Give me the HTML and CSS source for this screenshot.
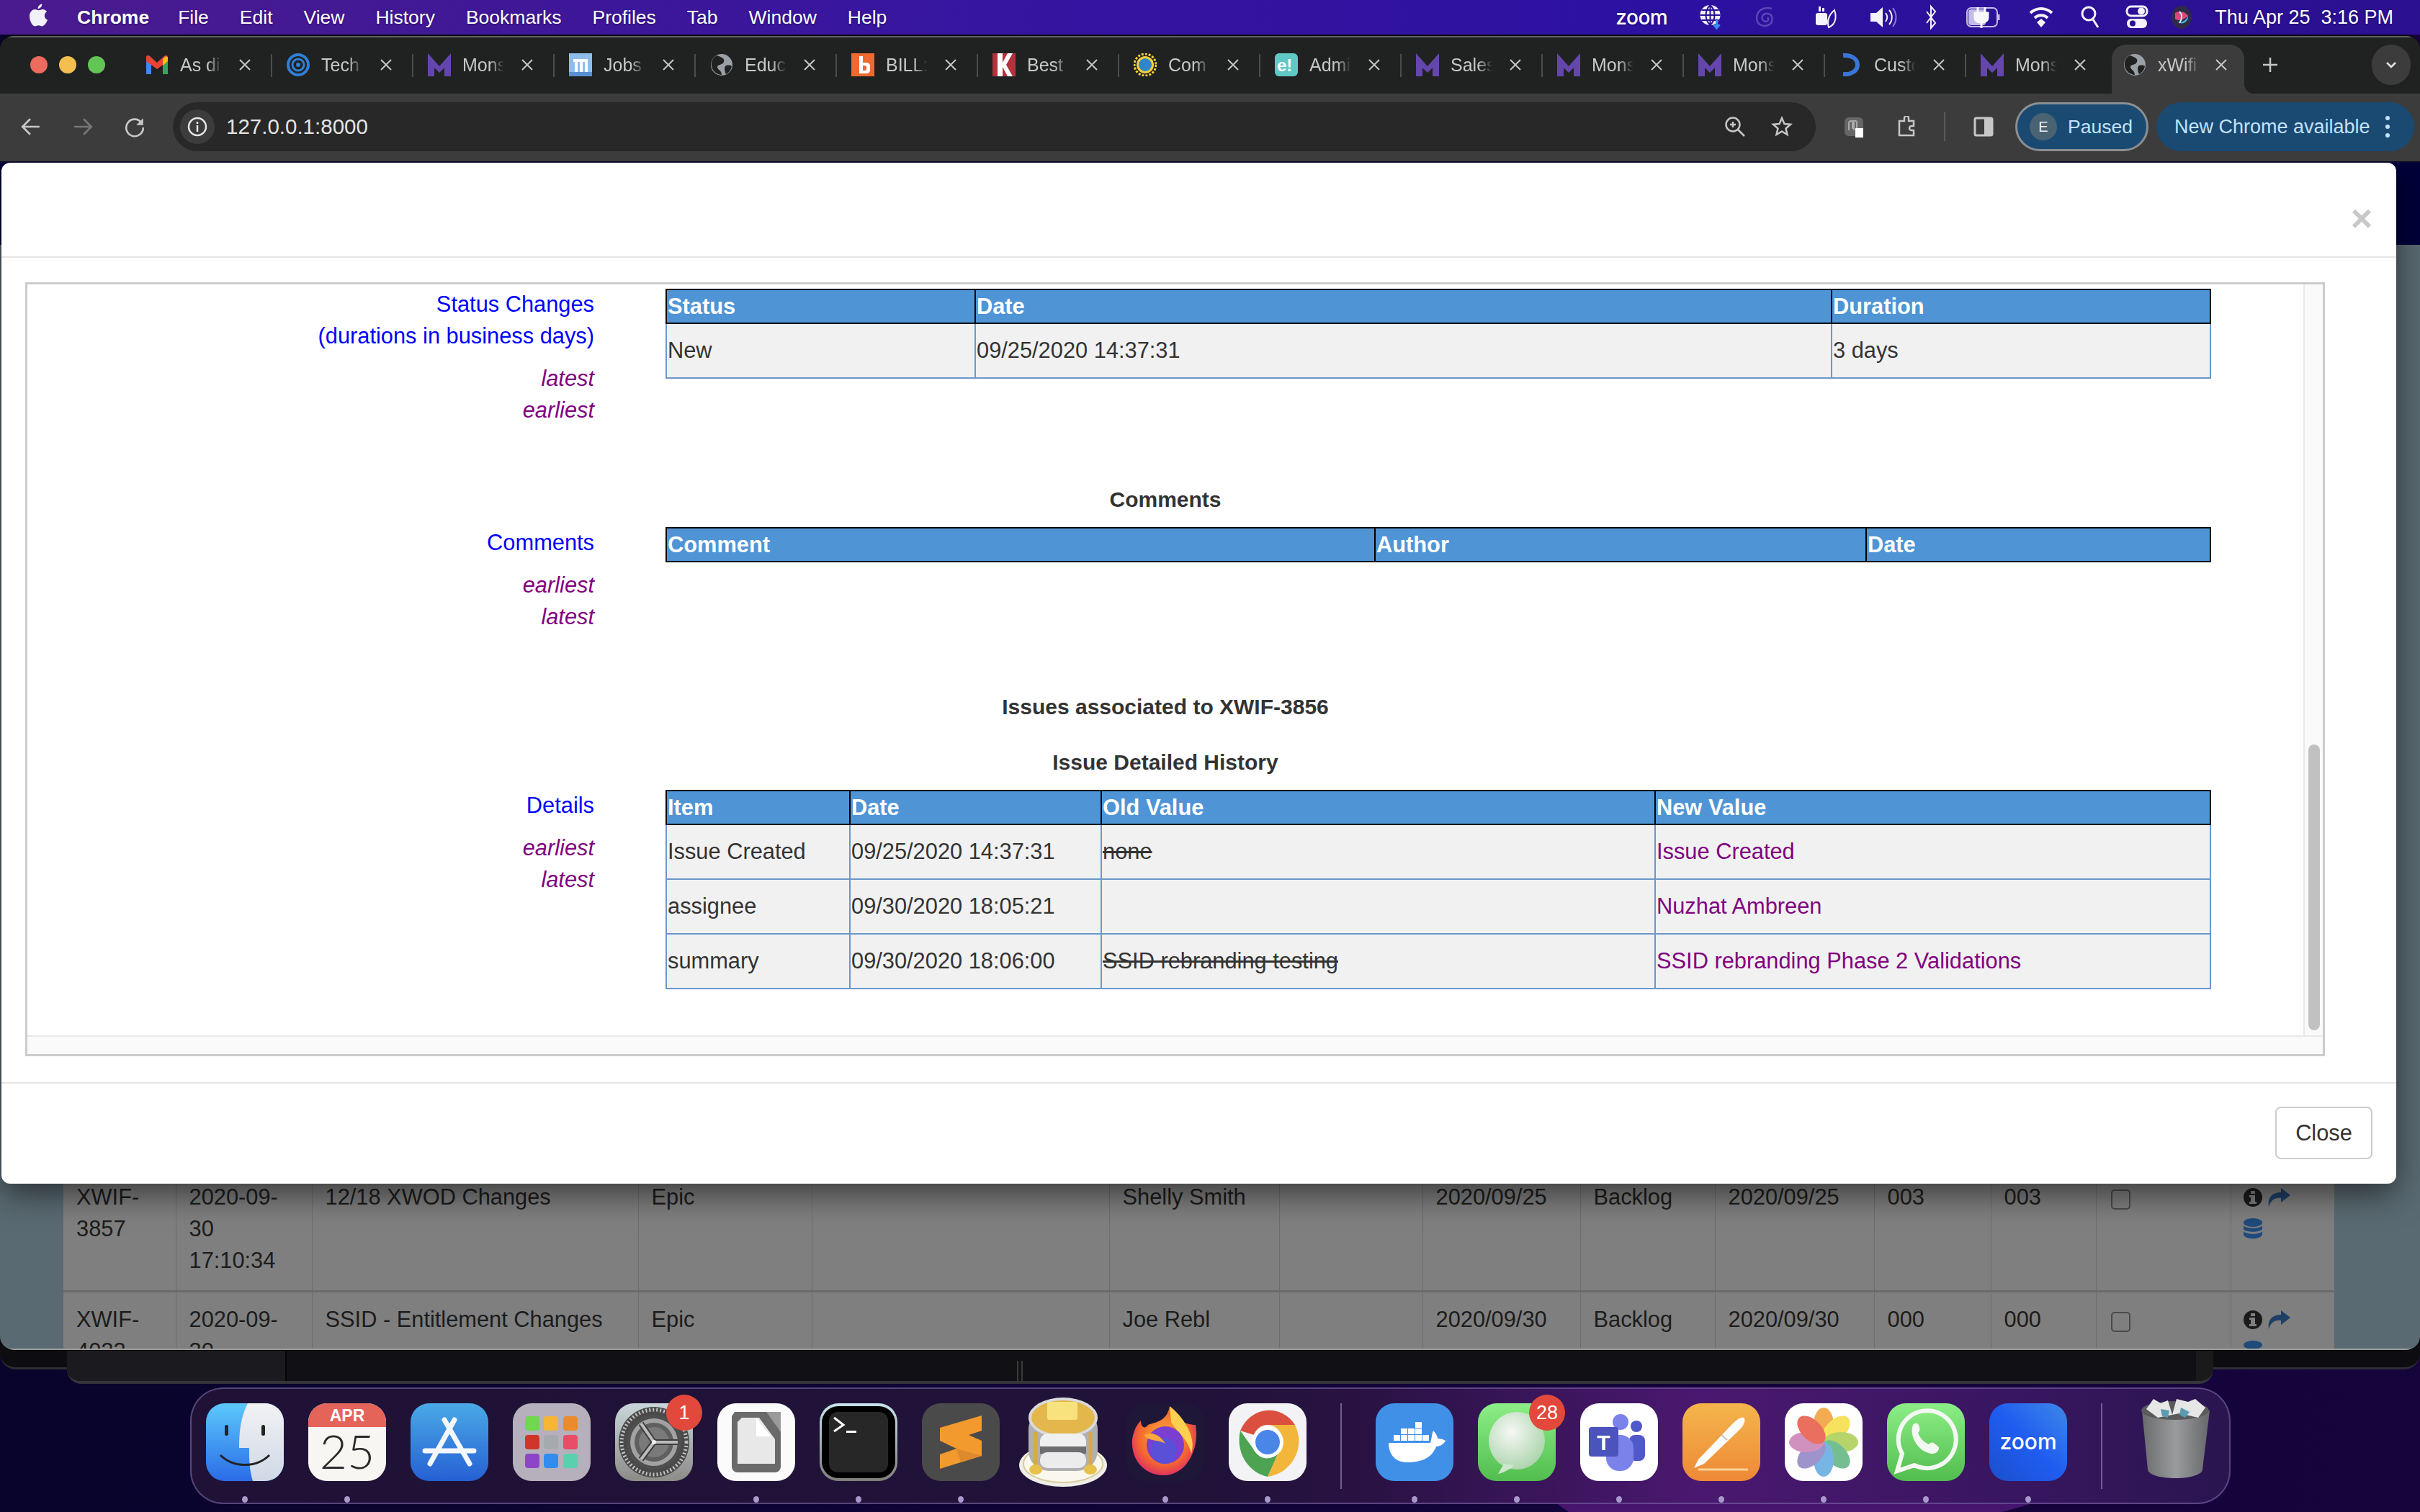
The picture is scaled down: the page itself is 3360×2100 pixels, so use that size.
FILE: index.html
```html
<!DOCTYPE html>
<html lang="en">
<head>
<meta charset="utf-8">
<title>xWiFi issue history</title>
<link rel="stylesheet" href="styles.css">
</head>
<body>
<svg class="defs" aria-hidden="true">
  <defs>
    <symbol id="fav-m" viewBox="0 0 32 32"><path d="M0 0 L16 18 L32 0 V32 H23 V20 L16 27 L9 20 V32 H0z" fill="#6546ae"/></symbol>
    <symbol id="fav-globe" viewBox="0 0 32 32"><circle cx="16" cy="16" r="15" fill="#9aa0a6"/><path d="M9 3c6 2 12 4 10 9s-9 3-9 7 6 4 6 11c-6 0-13-5-14-12S4 6 9 3zM22 17c4-1 7 0 8 1-1 5-4 9-8 11-2-4-3-10 0-12z" fill="#202222"/></symbol>
    <symbol id="tab-x" viewBox="0 0 20 20"><path d="M3 3 L17 17 M17 3 L3 17" stroke="#c4c7c5" stroke-width="2" fill="none"/></symbol>
    <symbol id="act-info" viewBox="0 0 28 28"><circle cx="14" cy="14" r="13" fill="#1b1b1b"/><rect x="11" y="5" width="6" height="4" fill="#7f7f7f"/><path d="M9 11h8v9h2v3H9v-3h2v-6H9z" fill="#7f7f7f"/></symbol>
    <symbol id="act-share" viewBox="0 0 33 28"><path d="M20 1 L33 11 L20 21 V15 C11 14 6 18 3 27 C1 15 7 7 20 7z" fill="#1f3f66"/></symbol>
    <symbol id="act-db" viewBox="0 0 28 30"><ellipse cx="14" cy="6" rx="13" ry="6" fill="#1f4a7a"/><path d="M1 10c3 5 23 5 26 0v5c-3 5-23 5-26 0zM1 18c3 5 23 5 26 0v5c-3 7-23 7-26 0z" fill="#1f4a7a"/></symbol>
    <linearGradient id="g-finder" x1="0" y1="0" x2="0" y2="1"><stop offset="0" stop-color="#5cc8fb"/><stop offset="1" stop-color="#2a6ce8"/></linearGradient>
    <linearGradient id="g-finder2" x1="0" y1="0" x2="0" y2="1"><stop offset="0" stop-color="#f2f2f4"/><stop offset="1" stop-color="#cfd9e6"/></linearGradient>
    <linearGradient id="g-store" x1="0" y1="0" x2="0" y2="1"><stop offset="0" stop-color="#4aa9e6"/><stop offset="1" stop-color="#2560d4"/></linearGradient>
    <linearGradient id="g-gear" x1="0" y1="0" x2="0" y2="1"><stop offset="0" stop-color="#c9d6da"/><stop offset="1" stop-color="#8c8c88"/></linearGradient>
    <linearGradient id="g-term" x1="0" y1="0" x2="0" y2="1"><stop offset="0" stop-color="#c6e2ea"/><stop offset="1" stop-color="#7f7f7b"/></linearGradient>
    <linearGradient id="g-msg" x1="0" y1="0" x2="0" y2="1"><stop offset="0" stop-color="#8cee86"/><stop offset="1" stop-color="#52bd4f"/></linearGradient>
    <linearGradient id="g-pages" x1="0" y1="0" x2="0" y2="1"><stop offset="0" stop-color="#f4b54c"/><stop offset="1" stop-color="#ee8936"/></linearGradient>
    <linearGradient id="g-zoom" x1="1" y1="0" x2="0" y2="1"><stop offset="0" stop-color="#3f88e8"/><stop offset=".5" stop-color="#1f5cf0"/><stop offset="1" stop-color="#1b50cc"/></linearGradient>
    <linearGradient id="g-trash" x1="0" y1="0" x2="1" y2="0"><stop offset="0" stop-color="#6a6b6d"/><stop offset=".5" stop-color="#9a9b9c"/><stop offset="1" stop-color="#66676a"/></linearGradient>
    <radialGradient id="g-bubble" cx=".4" cy=".35" r=".8"><stop offset="0" stop-color="#f5f8f4"/><stop offset="1" stop-color="#9fcea0"/></radialGradient>
    <radialGradient id="g-fox" cx=".5" cy=".45" r=".6"><stop offset="0" stop-color="#ffb03a"/><stop offset=".65" stop-color="#f4682e"/><stop offset="1" stop-color="#d9246f"/></radialGradient>
  </defs>
</svg>

<div class="wedge"></div>

<header class="menubar">
  <nav class="menu">
    <svg class="apple" viewBox="0 0 26 32"><path d="M18 0c.3 3-2.500 7-6 7-.4-3 2.500-6.500 6-7zM13 9c2 0 3.500-1.300 6-1.300 2 0 4.500 1 6 3.300-5 3-4 10 1 12-1.500 4-5 9-8 9-2 0-3-1.200-5-1.200S9.500 32 8 32C4 32 0 24 0 18 0 11 4.500 7.700 8 7.700c2 0 3.500 1.300 5 1.300z" fill="#f2f0f8"/></svg>
    <span class="menu-app">Chrome</span>
    <span>File</span><span>Edit</span><span>View</span><span>History</span><span>Bookmarks</span><span>Profiles</span><span>Tab</span><span>Window</span><span>Help</span>
  </nav>
  <div class="status">
    <span class="status-zoom">zoom</span>
    <svg class="st-cell" viewBox="0 0 32 36"><circle cx="15" cy="15" r="14" fill="#f0f0f8"/><path d="M15 1v28M1 15h28M3 8h24M3 22h24M15 1c-8 8-8 20 0 28M15 1c8 8 8 20 0 28" stroke="#2a1098" stroke-width="2" fill="none"/><path d="M24 22v9M20 28l4 5 4-5" stroke="#3a8cf0" stroke-width="3" fill="none"/></svg>
    <svg class="st-cell" viewBox="0 0 32 36"><path d="M26 6C14 2 5 10 5 19s9 13 16 10 8-14 0-16-11 7-6 10 8-2 5-5" stroke="#5a46b4" stroke-width="2.500" fill="none"/></svg>
    <svg class="st-cell" viewBox="0 0 38 36"><rect x="4" y="12" width="16" height="17" rx="3" fill="#f4f2fa"/><rect x="8" y="3" width="3" height="7" fill="#f4f2fa"/><rect x="13" y="5" width="3" height="5" fill="#f4f2fa"/><path d="M22 32c8-3 12-12 8-24-7 6-11 14-8 24z" stroke="#f4f2fa" stroke-width="2" fill="none"/></svg>
    <svg class="st-cell" viewBox="0 0 38 36"><path d="M2 12h8l9-8v28l-9-8H2z" fill="#f4f2fa"/><path d="M23 12c3 4 3 8 0 12M28 8c5 6 5 14 0 20" stroke="#f4f2fa" stroke-width="2" fill="none"/><path d="M33 5c6 8 6 18 0 26" stroke="#8a7ad0" stroke-width="2" fill="none"/></svg>
    <svg class="st-cell" viewBox="0 0 18 36"><path d="M3 10l12 16-6 7V3l6 7L3 26" stroke="#f4f2fa" stroke-width="2" fill="none"/></svg>
    <svg class="st-cell" viewBox="0 0 50 36"><rect x="2" y="5" width="42" height="26" rx="6" stroke="#c4bce8" stroke-width="2" fill="none"/><rect x="4" y="7" width="24" height="22" rx="4" fill="#c4bce8"/><path d="M17 4v8M27 4v8M13 12h18v6c0 5-4 7-9 7s-9-2-9-7zM22 25v8" stroke="#f8f8fc" stroke-width="3" fill="#f8f8fc"/><path d="M46 14v8" stroke="#c4bce8" stroke-width="3"/></svg>
    <svg class="st-cell" viewBox="0 0 36 36"><path d="M3 12c9-8 21-8 30 0M9 19c5-5 13-5 18 0" stroke="#f4f2fa" stroke-width="4" fill="none"/><path d="M12 25l6-5 6 5-6 7z" fill="#f4f2fa"/></svg>
    <svg class="st-cell" viewBox="0 0 26 36"><circle cx="12" cy="13" r="9" stroke="#f4f2fa" stroke-width="3" fill="none"/><path d="M18 21l7 11" stroke="#f4f2fa" stroke-width="3"/></svg>
    <svg class="st-cell" viewBox="0 0 32 36"><rect x="2" y="3" width="28" height="13" rx="6" stroke="#f4f2fa" stroke-width="3" fill="none"/><circle cx="22" cy="9.500" r="5" fill="#f4f2fa"/><rect x="2" y="20" width="28" height="13" rx="6" fill="#f4f2fa"/><circle cx="10" cy="26.500" r="4" fill="#2a1098"/></svg>
    <svg class="st-cell" viewBox="0 0 30 36"><ellipse cx="15" cy="18" rx="14" ry="16" fill="#2f2a48"/><path d="M6 12c6-4 14-2 18 4-6 6-14 8-18 4z" fill="#d8487c"/><path d="M9 24c5 2 11 0 15-8 1 8-8 14-15 8z" fill="#4ab0e0"/><path d="M12 10c4 4 4 10 0 16" stroke="#c0f0e0" stroke-width="2" fill="none"/></svg>
    <span class="status-date">Thu Apr 25&nbsp; 3:16 PM</span>
  </div>
</header>

<div class="back-window back-wide"></div>
<div class="back-window back-mid">
  <div class="back-side"></div>
  <div class="back-main"><span class="back-grip"></span></div>
  <div class="back-end"></div>
</div>

<main class="chrome">
  <div class="strip">
    <div class="lights"><i class="light red"></i><i class="light yellow"></i><i class="light green"></i></div>
    <div class="tab">
      <svg class="fav" viewBox="0 0 32 32"><path d="M1 5v24h7V14z" fill="#4285f4"/><path d="M31 5v24h-7V14z" fill="#34a853"/><path d="M1 5c0-2 3-3 5-1l10 9 10-9c2-2 5-1 5 1v6L16 22 1 11z" fill="#ea4335"/><path d="M24 8l3-3c2-1 4 0 4 2v4l-7 6z" fill="#fbbc04"/></svg>
      <span class="tab-title">As di</span><svg class="tab-close"><use href="#tab-x"/></svg>
    </div>
    <div class="tab">
      <svg class="fav" viewBox="0 0 32 32"><circle cx="16" cy="16" r="14" stroke="#2f7fd6" stroke-width="4" fill="none"/><circle cx="16" cy="16" r="8" stroke="#2f7fd6" stroke-width="3" fill="none"/><circle cx="16" cy="16" r="3" fill="#2f7fd6"/></svg>
      <span class="tab-title">Tech</span><svg class="tab-close"><use href="#tab-x"/></svg>
    </div>
    <div class="tab"><svg class="fav"><use href="#fav-m"/></svg><span class="tab-title">Mons</span><svg class="tab-close"><use href="#tab-x"/></svg></div>
    <div class="tab">
      <svg class="fav" viewBox="0 0 32 32"><rect width="32" height="32" fill="#8fbde9"/><path d="M6 8h20v18h-4V12h-3v14h-4V12h-3v14H8V12H6z" fill="#fff"/><rect y="26" width="32" height="6" fill="#5b8fd0"/></svg>
      <span class="tab-title">Jobs</span><svg class="tab-close"><use href="#tab-x"/></svg>
    </div>
    <div class="tab"><svg class="fav"><use href="#fav-globe"/></svg><span class="tab-title">Educ</span><svg class="tab-close"><use href="#tab-x"/></svg></div>
    <div class="tab">
      <svg class="fav" viewBox="0 0 32 32"><rect width="32" height="32" fill="#ef6a2e"/><path d="M11 4h5v9h5c3 0 5 2 5 5v5c0 3-2 5-5 5H11zM16 17v7h3c1 0 2-1 2-2v-3c0-1-1-2-2-2z" fill="#fff"/></svg>
      <span class="tab-title">BILL:</span><svg class="tab-close"><use href="#tab-x"/></svg>
    </div>
    <div class="tab">
      <svg class="fav" viewBox="0 0 32 32"><rect width="32" height="32" fill="#b3323c"/><path d="M7 0h7v13L21 0h7l-9 16 9 16h-7l-7-13v13H7z" fill="#fff"/></svg>
      <span class="tab-title">Best</span><svg class="tab-close"><use href="#tab-x"/></svg>
    </div>
    <div class="tab">
      <svg class="fav" viewBox="0 0 32 32"><circle cx="16" cy="16" r="15" stroke="#f5cf3c" stroke-width="3" stroke-dasharray="3 2" fill="none"/><circle cx="16" cy="16" r="12" fill="#f5cf3c"/><circle cx="16" cy="16" r="9" fill="#2f86c9"/></svg>
      <span class="tab-title">Com</span><svg class="tab-close"><use href="#tab-x"/></svg>
    </div>
    <div class="tab">
      <svg class="fav" viewBox="0 0 32 32"><rect width="32" height="32" rx="6" fill="#5fc9c5"/><text class="fav-e" x="3" y="25">e!</text></svg>
      <span class="tab-title">Admi</span><svg class="tab-close"><use href="#tab-x"/></svg>
    </div>
    <div class="tab"><svg class="fav"><use href="#fav-m"/></svg><span class="tab-title">Sales</span><svg class="tab-close"><use href="#tab-x"/></svg></div>
    <div class="tab"><svg class="fav"><use href="#fav-m"/></svg><span class="tab-title">Mons</span><svg class="tab-close"><use href="#tab-x"/></svg></div>
    <div class="tab"><svg class="fav"><use href="#fav-m"/></svg><span class="tab-title">Mons</span><svg class="tab-close"><use href="#tab-x"/></svg></div>
    <div class="tab">
      <svg class="fav" viewBox="0 0 32 32"><path d="M5 3c12-1 20 5 20 13S17 30 5 29" stroke="#3a76d8" stroke-width="6" fill="none"/></svg>
      <span class="tab-title">Custo</span><svg class="tab-close"><use href="#tab-x"/></svg>
    </div>
    <div class="tab"><svg class="fav"><use href="#fav-m"/></svg><span class="tab-title">Mons</span><svg class="tab-close"><use href="#tab-x"/></svg></div>
    <div class="tab tab-active"><svg class="fav"><use href="#fav-globe"/></svg><span class="tab-title">xWifi</span><svg class="tab-close"><use href="#tab-x"/></svg></div>
    <svg class="newtab" viewBox="0 0 24 24"><path d="M12 2v20M2 12h20" stroke="#c4c7c5" stroke-width="2.500"/></svg>
    <div class="tabmenu"><svg class="tabmenu-icon" viewBox="0 0 16 12"><path d="M2 3l6 6 6-6" stroke="#e3e3e3" stroke-width="2.500" fill="none"/></svg></div>
  </div>

  <div class="toolbar">
    <button class="tool tool-first"><svg class="tool-icon" viewBox="0 0 28 28"><path d="M25 14H4M13 4L3 14l10 10" stroke="#c7c7c7" stroke-width="2.500" fill="none"/></svg></button>
    <button class="tool"><svg class="tool-icon" viewBox="0 0 28 28"><path d="M3 14h21M15 4l10 10-10 10" stroke="#777" stroke-width="2.500" fill="none"/></svg></button>
    <button class="tool"><svg class="tool-icon" viewBox="0 0 28 28"><path d="M23 9A11 11 0 1 0 25 15" stroke="#c7c7c7" stroke-width="2.500" fill="none"/><path d="M25 3v9h-9z" fill="#c7c7c7"/></svg></button>
    <div class="omnibox">
      <span class="siteinfo"><svg class="siteinfo-icon" viewBox="0 0 28 28"><circle cx="14" cy="14" r="12" stroke="#e6e6e6" stroke-width="2.500" fill="none"/><path d="M14 12v9M14 7v3" stroke="#e6e6e6" stroke-width="2.500"/></svg></span>
      <span class="url">127.0.0.1:8000</span>
      <svg class="omni-icon omni-zoom" viewBox="0 0 30 30"><circle cx="12" cy="12" r="9.500" stroke="#c7c7c7" stroke-width="2.500" fill="none"/><path d="M19 19l9 9M12 8v8M8 12h8" stroke="#c7c7c7" stroke-width="2.500"/></svg>
      <svg class="omni-icon omni-star" viewBox="0 0 30 30"><path d="M15 3l3.500 8 8.500.8-6.500 5.700 2 8.500-7.500-4.500L7.500 26l2-8.500L3 11.800l8.500-.8z" stroke="#c7c7c7" stroke-width="2.500" fill="none"/></svg>
    </div>
    <button class="tool tool-ext"><svg class="tool-icon" viewBox="0 0 30 30"><rect x="2" y="2" width="26" height="26" rx="6" fill="#666"/><path d="M8 20V10c0-4 7-4 7 0v10M13 18V9c0-3 6-3 6 0v9" stroke="#aaa" stroke-width="2" fill="none"/><rect x="17" y="17" width="11" height="13" fill="#fff"/></svg></button>
    <button class="tool tool-near"><svg class="tool-icon" viewBox="0 0 30 30"><path d="M5 7h7V3a3 3 0 0 1 6 0v4h7v7h-3a3 3 0 0 0 0 6h3v7H5z" stroke="#c7c7c7" stroke-width="2.500" fill="none"/></svg></button>
    <span class="tool-sep"></span>
    <button class="tool"><svg class="tool-icon" viewBox="0 0 30 30"><rect x="3" y="3" width="24" height="24" rx="2" stroke="#c7c7c7" stroke-width="3" fill="none"/><rect x="16" y="3" width="11" height="24" fill="#c7c7c7"/></svg></button>
    <div class="pill pill-profile"><span class="avatar">E</span><span class="pill-text">Paused</span></div>
    <div class="pill pill-update"><span class="pill-text">New Chrome available</span><span class="kebab"><i></i><i></i><i></i></span></div>
  </div>

  <section class="page">
    <div class="page-nav"></div>
    <div class="page-spacer"></div>
    <table class="issues">
      <colgroup><col class="c1"><col class="c2"><col class="c3"><col class="c4"><col class="c5"><col class="c6"><col class="c7"><col class="c8"><col class="c9"><col class="c10"><col class="c11"><col class="c12"><col class="c13"><col class="c14"></colgroup>
      <tr>
        <td>XWIF-3857</td><td>2020-09-30 17:10:34</td><td>12/18 XWOD Changes</td><td>Epic</td><td></td><td>Shelly Smith</td><td></td><td>2020/09/25</td><td>Backlog</td><td>2020/09/25</td><td>003</td><td>003</td>
        <td><span class="bg-check"></span></td>
        <td class="actions"><div class="act-row"><svg class="act-info"><use href="#act-info"/></svg><svg class="act-share"><use href="#act-share"/></svg></div><div class="act-row"><svg class="act-db"><use href="#act-db"/></svg></div></td>
      </tr>
      <tr>
        <td>XWIF-4023</td><td>2020-09-30 17:10:34</td><td>SSID - Entitlement Changes</td><td>Epic</td><td></td><td>Joe Rebl</td><td></td><td>2020/09/30</td><td>Backlog</td><td>2020/09/30</td><td>000</td><td>000</td>
        <td><span class="bg-check"></span></td>
        <td class="actions"><div class="act-row"><svg class="act-info"><use href="#act-info"/></svg><svg class="act-share"><use href="#act-share"/></svg></div><div class="act-row"><svg class="act-db"><use href="#act-db"/></svg></div></td>
      </tr>
    </table>

    <div class="modal">
      <div class="modal-head"><span class="modal-x">×</span></div>
      <div class="modal-body">
        <div class="frame">
          <div class="view">
            <div class="hist hist-first">
              <div class="hist-label">
                <a class="lnk">Status Changes</a>
                <a class="lnk">(durations in business days)</a>
                <a class="sort">latest</a>
                <a class="sort-next">earliest</a>
              </div>
              <table class="grid-table">
                <colgroup><col class="s1"><col class="s2"><col class="s3"></colgroup>
                <tr><th>Status</th><th>Date</th><th>Duration</th></tr>
                <tr><td>New</td><td>09/25/2020 14:37:31</td><td>3 days</td></tr>
              </table>
            </div>
            <h4 class="sec-title sec-comments">Comments</h4>
            <div class="hist">
              <div class="hist-label">
                <a class="lnk">Comments</a>
                <a class="sort">earliest</a>
                <a class="sort-next">latest</a>
              </div>
              <table class="grid-table">
                <colgroup><col class="m1"><col class="m2"><col class="m3"></colgroup>
                <tr><th>Comment</th><th>Author</th><th>Date</th></tr>
              </table>
            </div>
            <h4 class="sec-title sec-issues">Issues associated to XWIF-3856</h4>
            <h4 class="sec-title">Issue Detailed History</h4>
            <div class="hist">
              <div class="hist-label">
                <a class="lnk">Details</a>
                <a class="sort">earliest</a>
                <a class="sort-next">latest</a>
              </div>
              <table class="grid-table">
                <colgroup><col class="d1"><col class="d2"><col class="d3"><col class="d4"></colgroup>
                <tr><th>Item</th><th>Date</th><th>Old Value</th><th>New Value</th></tr>
                <tr><td>Issue Created</td><td>09/25/2020 14:37:31</td><td><del>none</del></td><td class="newval">Issue Created</td></tr>
                <tr><td>assignee</td><td>09/30/2020 18:05:21</td><td></td><td class="newval">Nuzhat Ambreen</td></tr>
                <tr><td>summary</td><td>09/30/2020 18:06:00</td><td><del>SSID rebranding testing</del></td><td class="newval">SSID rebranding Phase 2 Validations</td></tr>
              </table>
            </div>
          </div>
          <div class="vbar"><div class="vthumb"></div></div>
          <div class="hbar"></div>
        </div>
      </div>
      <div class="modal-foot"><button class="btn-close">Close</button></div>
    </div>
  </section>
</main>

<footer class="dock">
  <div class="dock-item"><svg class="app" viewBox="0 0 108 108"><rect width="108" height="108" rx="26" fill="url(#g-finder)"/><path d="M58 0H82a26 26 0 0 1 26 26V82a26 26 0 0 1-26 26H65C60 92 60 78 60 62H46C46 40 48 20 58 0z" fill="url(#g-finder2)"/><rect x="26" y="30" width="5" height="15" rx="2.500" fill="#222"/><rect x="77" y="30" width="5" height="15" rx="2.500" fill="#222"/><path d="M20 72c18 18 50 18 68 0" stroke="#222" stroke-width="3" fill="none"/></svg><i class="dot"></i></div>
  <div class="dock-item"><svg class="app" viewBox="0 0 108 108"><rect width="108" height="108" rx="26" fill="#f7f6f3"/><path d="M0 33V26A26 26 0 0 1 26 0H82a26 26 0 0 1 26 26V33z" fill="#e4645a"/><text class="cal-month" x="54" y="25">APR</text><text class="cal-day" x="54" y="91">25</text></svg><i class="dot"></i></div>
  <div class="dock-item"><svg class="app" viewBox="0 0 108 108"><rect width="108" height="108" rx="26" fill="url(#g-store)"/><path d="M47 23l35 61M61 23L27 84M20 66h68" stroke="#f4f8fd" stroke-width="7" stroke-linecap="round" fill="none"/></svg><i class="dot dot-off"></i></div>
  <div class="dock-item"><svg class="app" viewBox="0 0 108 108"><rect width="108" height="108" rx="26" fill="#b5b0bc"/><rect x="17" y="18" width="20" height="20" rx="4" fill="#6fd84f"/><rect x="43" y="18" width="20" height="20" rx="4" fill="#f5b636"/><rect x="70" y="18" width="20" height="20" rx="4" fill="#ec8a2e"/><rect x="17" y="44" width="20" height="20" rx="4" fill="#d0352a"/><rect x="43" y="44" width="20" height="20" rx="4" fill="#a4aaad"/><rect x="70" y="44" width="20" height="20" rx="4" fill="#e94d68"/><rect x="17" y="70" width="20" height="20" rx="4" fill="#8e44c8"/><rect x="43" y="70" width="20" height="20" rx="4" fill="#2f8df0"/><rect x="70" y="70" width="20" height="20" rx="4" fill="#5bd0ae"/></svg><i class="dot dot-off"></i></div>
  <div class="dock-item"><svg class="app" viewBox="0 0 108 108"><rect width="108" height="108" rx="26" fill="url(#g-gear)"/><circle cx="54" cy="54" r="49" fill="#4a4a4a"/><circle cx="54" cy="54" r="45" stroke="#c4c4c4" stroke-width="5" stroke-dasharray="2 3" fill="none"/><circle cx="54" cy="54" r="38" fill="#4f4f4f"/><circle cx="54" cy="54" r="33" fill="#a2a2a2"/><circle cx="54" cy="54" r="27" fill="#5f5f5f"/><circle cx="54" cy="54" r="21" fill="#7a7a7a"/><path d="M54 54L36 28M54 54H87M54 54L36 78" stroke="#3c3c3c" stroke-width="8"/><path d="M54 54L36 28M54 54H87M54 54L36 78" stroke="#bbb" stroke-width="4"/><circle cx="54" cy="54" r="3" fill="#eee"/></svg><i class="dot dot-off"></i><span class="badge">1</span></div>
  <div class="dock-item"><svg class="app" viewBox="0 0 108 108"><rect width="108" height="108" rx="26" fill="#fbfbfb"/><path d="M24 12H74L88 30V88a8 8 0 0 1-8 8H28a8 8 0 0 1-8-8V18z" fill="#6a6a6a"/><path d="M68 12H88V40z" fill="#9a9a9a"/><path d="M34 20H58L80 50V84H28V26z" fill="#e8e8e8"/><path d="M54 20V46H74z" fill="#fff"/></svg><i class="dot"></i></div>
  <div class="dock-item"><svg class="app" viewBox="0 0 108 108"><rect width="108" height="108" rx="26" fill="url(#g-term)"/><rect x="3" y="4" width="102" height="100" rx="23" fill="#000"/><rect x="13" y="12" width="82" height="84" rx="12" fill="#272727"/><path d="M20 20l13 10-13 9" stroke="#fff" stroke-width="3" fill="none"/><rect x="37" y="38" width="14" height="3" fill="#fff"/></svg><i class="dot"></i></div>
  <div class="dock-item"><svg class="app" viewBox="0 0 108 108"><rect width="108" height="108" rx="26" fill="#4a4a4a"/><path d="M83 17V38L65 44 83 52V73L25 91V71L48 63 25 52V34z" fill="#f29a2e"/><path d="M48 63L83 73 54 82z" fill="#dc8a2c"/></svg><i class="dot"></i></div>
  <div class="dock-item"><svg class="app" viewBox="0 0 108 108"><ellipse cx="54" cy="86" rx="61" ry="30" fill="#efeee8"/><ellipse cx="54" cy="84" rx="55" ry="26" fill="#faf8ee" stroke="#d8cc9c" stroke-width="2"/><rect x="6" y="8" width="96" height="86" rx="28" fill="#b0b0b2"/><ellipse cx="54" cy="20" rx="48" ry="28" fill="#d9dadc"/><ellipse cx="54" cy="20" rx="44" ry="24" fill="#e3b74c"/><rect x="32" y="-2" width="42" height="25" rx="3" fill="#f7e27e"/><rect x="22" y="42" width="64" height="26" rx="11" fill="#f0f0f0"/><rect x="22" y="60" width="64" height="10" fill="#6e6e70"/><rect x="22" y="68" width="64" height="22" rx="10" fill="#ececec"/><path d="M16 40v50M92 40v50" stroke="#d9ab3c" stroke-width="5"/><ellipse cx="16" cy="92" rx="9" ry="7" fill="#e8c04c"/><ellipse cx="92" cy="92" rx="9" ry="7" fill="#e8c04c"/></svg><i class="dot dot-off"></i></div>
  <div class="dock-item"><svg class="app" viewBox="0 0 108 108"><rect width="108" height="108" rx="26" fill="#1e1738"/><path d="M60 4C62 24 86 30 96 30 102 62 84 100 52 100 24 100 6 78 8 50 10 38 14 30 20 24 20 34 26 36 30 30 40 26 56 26 60 4z" fill="url(#g-fox)"/><path d="M60 4C78 18 98 46 90 70 86 50 70 40 62 26z" fill="#ffd050"/><circle cx="54" cy="58" r="26" fill="#7a3fd0"/><circle cx="52" cy="66" r="18" fill="#5a50d8"/><path d="M24 44c14-6 24 2 30 12-10-6-22-2-30-12z" fill="#ffa83a"/></svg><i class="dot"></i></div>
  <div class="dock-item"><svg class="app" viewBox="0 0 108 108"><rect width="108" height="108" rx="26" fill="#f3f3f6"/><path d="M16 38A44 48 0 0 1 92 30H54a20 22 0 0 0-19 14z" fill="#db4f3f"/><path d="M92 30A50 50 0 0 1 54 102L70 66A20 22 0 0 0 54 30z" fill="#f2b63a"/><path d="M54 102A48 52 0 0 1 16 38L36 66A20 22 0 0 0 70 66z" fill="#4ea352"/><circle cx="54" cy="54" r="22" fill="#fff"/><circle cx="54" cy="54" r="17" fill="#4a86e8"/></svg><i class="dot"></i></div>
  <span class="dock-sep"></span>
  <div class="dock-item"><svg class="app" viewBox="0 0 108 108"><rect width="108" height="108" rx="26" fill="#4090e8"/><g fill="#fff"><rect x="55" y="26" width="9" height="8"/><rect x="35" y="35" width="9" height="8"/><rect x="45" y="35" width="9" height="8"/><rect x="55" y="35" width="9" height="8"/><rect x="25" y="44" width="9" height="8"/><rect x="35" y="44" width="9" height="8"/><rect x="45" y="44" width="9" height="8"/><rect x="55" y="44" width="9" height="8"/><rect x="65" y="44" width="9" height="8"/><path d="M18 55H76C78 48 78 42 80 38 84 42 86 46 86 49 90 49 94 50 97 52 94 58 88 60 84 60 78 76 64 82 44 82 28 82 18 72 18 55z"/></g></svg><i class="dot"></i></div>
  <div class="dock-item"><svg class="app" viewBox="0 0 108 108"><rect width="108" height="108" rx="26" fill="url(#g-msg)"/><ellipse cx="54" cy="52" rx="39" ry="40" fill="url(#g-bubble)"/><path d="M36 84L28 98C36 96 44 92 50 86z" fill="#cfe6cf"/></svg><i class="dot"></i><span class="badge">28</span></div>
  <div class="dock-item"><svg class="app" viewBox="0 0 108 108"><rect width="108" height="108" rx="26" fill="#fff"/><circle cx="56" cy="26" r="11" fill="#7b83eb"/><circle cx="78" cy="32" r="8" fill="#5059c9"/><rect x="68" y="44" width="22" height="36" rx="8" fill="#5059c9"/><rect x="36" y="44" width="38" height="50" rx="18" fill="#7b83eb"/><rect x="12" y="33" width="41" height="41" rx="4" fill="#4b53bc"/><text class="teams-t" x="32.500" y="65">T</text></svg><i class="dot"></i></div>
  <div class="dock-item"><svg class="app" viewBox="0 0 108 108"><rect width="108" height="108" rx="26" fill="url(#g-pages)"/><path d="M22 92H91" stroke="#fbd29a" stroke-width="3"/><path d="M16 90L22 78 70 28C78 20 84 18 86 21 88 25 84 32 78 38L30 84z" fill="#fbfbfb"/><path d="M54 44l8 7" stroke="#c9c0b4" stroke-width="2"/></svg><i class="dot"></i></div>
  <div class="dock-item"><svg class="app" viewBox="0 0 108 108"><rect width="108" height="108" rx="26" fill="#fefefe"/><g class="petals"><ellipse cx="54" cy="30" rx="14" ry="24" fill="#f09a2c"/><ellipse cx="54" cy="30" rx="14" ry="24" fill="#f5dc3a" transform="rotate(45 54 54)"/><ellipse cx="54" cy="30" rx="14" ry="24" fill="#a8cc4a" transform="rotate(90 54 54)"/><ellipse cx="54" cy="30" rx="14" ry="24" fill="#58b07a" transform="rotate(135 54 54)"/><ellipse cx="54" cy="30" rx="14" ry="24" fill="#5aa6de" transform="rotate(180 54 54)"/><ellipse cx="54" cy="30" rx="14" ry="24" fill="#8a7cc0" transform="rotate(225 54 54)"/><ellipse cx="54" cy="30" rx="14" ry="24" fill="#c87ab0" transform="rotate(270 54 54)"/><ellipse cx="54" cy="30" rx="14" ry="24" fill="#e8503c" transform="rotate(315 54 54)"/></g></svg><i class="dot"></i></div>
  <div class="dock-item"><svg class="app" viewBox="0 0 108 108"><rect width="108" height="108" rx="26" fill="url(#g-msg)"/><path d="M14 94L21 70A40 40 0 1 1 38 86z" stroke="#f4f8f2" stroke-width="6" fill="none"/><path d="M36 30c4-4 8-2 9 3s0 6-2 8c3 8 8 13 15 16 3-3 5-3 8-1l6 5c1 4-4 10-10 9C44 68 30 46 36 30z" fill="#f4f8f2"/></svg><i class="dot"></i></div>
  <div class="dock-item"><svg class="app" viewBox="0 0 108 108"><rect width="108" height="108" rx="26" fill="url(#g-zoom)"/><text class="zoom-word" x="54" y="64">zoom</text></svg><i class="dot"></i></div>
  <span class="dock-sep"></span>
  <div class="dock-item"><svg class="app" viewBox="0 0 108 108"><path d="M8 10L16 92C18 108 90 108 92 92L102 10z" fill="url(#g-trash)"/><ellipse cx="54" cy="10" rx="47" ry="13" fill="#5a5a5c"/><path d="M14 8L24 -6 34 0 44 -4 50 16 56 -6 72 -2 82 -6 96 6 86 20 60 14 30 20z" fill="#e6e6e6"/><path d="M34 8l12 2-2 10-8-2zM62 6l12 6-6 8-8-4z" fill="#5a9bb0"/></svg><i class="dot dot-off"></i></div>
</footer>
</body>
</html>
```

FILE: styles.css
```css
* { box-sizing: border-box; }
html, body { margin: 0; padding: 0; }
body {
  width: 3360px;
  height: 2100px;
  position: relative;
  overflow: hidden;
  background: linear-gradient(100deg, #060429 0%, #120438 60%, #16043c 100%);
  font-family: "Liberation Sans", Arial, sans-serif;
  font-size: 30.8px;
  line-height: 44px;
  color: #333;
}
.defs { position: absolute; width: 0; height: 0; }
.wedge {
  position: absolute;
  left: 2150px;
  top: 2080px;
  width: 700px;
  height: 20px;
  background: #46156e;
  clip-path: polygon(0 0, 100% 0, 90% 100%, 4% 100%);
}

/* menu bar */
.menubar {
  height: 48px;
  display: flex;
  justify-content: space-between;
  background: linear-gradient(90deg, #4a1b8e 0%, #3615a0 40%, #2c11a0 70%, #2b1090 100%);
  color: #fff;
  font-size: 26.500px;
  line-height: 44px;
  text-shadow: 0 1px 3px rgba(0,0,0,.35);
}
.menu { display: flex; align-items: center; gap: 43px; padding-left: 41px; }
.apple { width: 25px; height: 32px; margin-top: -6px; }
.menu-app { font-weight: 700; margin: 0 -3px 0 -2px; }
.status {
  display: grid;
  grid-template-columns: 96px 73px 76px 96px 60px 74px 72px 88px 46px 86px 38px auto;
  align-items: center;
  justify-items: center;
  padding-right: 37px;
}
.status-zoom { font-family: "Inter", sans-serif; font-size: 28px; font-weight: 500; letter-spacing: -.5px; justify-self: start; }
.st-cell { height: 36px; width: 100%; }
.status-date { margin-left: 27px; white-space: nowrap; font-size: 27px; }

/* windows behind */
.back-window { position: absolute; }
.back-wide {
  left: 0; top: 1840px; width: 3360px; height: 62px;
  background: #0d0d11;
  border-bottom: 3px solid #2e2e32;
  border-radius: 0 0 22px 22px;
}
.back-mid {
  left: 93px; top: 1840px; width: 2980px; height: 82px;
  display: flex;
  border-bottom: 4px solid #34343a;
  border-radius: 0 0 20px 20px;
  overflow: hidden;
  background: #111014;
}
.back-side { width: 305px; background: #1b1b1f; border-right: 2px solid #050505; }
.back-main { flex: 1; position: relative; background: #111015; }
.back-grip {
  position: absolute; left: 1014px; top: 50px; width: 8px; height: 28px;
  border-left: 2px solid #3a3a3a; border-right: 2px solid #3a3a3a;
}
.back-end { width: 24px; background: #1a1a1b; }

/* chrome window */
.chrome {
  position: absolute;
  left: 0; top: 48px;
  width: 3360px;
  height: 1828px;
  display: flex;
  flex-direction: column;
  overflow: hidden;
  border-top: 2px solid #0b0b12;
  border-bottom: 1px solid #000;
  border-radius: 20px;
  background: #202222;
}
.strip {
  height: 80px;
  display: flex;
  align-items: stretch;
  padding-top: 10px;
  background: #202222;
  border-top: 2px solid #606262;
  flex: none;
  font-size: 25px;
  color: #c8c8c8;
}
.lights { width: 180px; padding: 0 0 12px 42px; display: flex; align-items: center; gap: 16px; }
.light { display: block; width: 24px; height: 24px; border-radius: 50%; }
.red { background: #ed6a5e; }
.yellow { background: #f5bf4f; }
.green { background: #62c554; }
.tab {
  width: 196px;
  height: 68px;
  padding: 0 0 12px 22px;
  display: flex;
  align-items: center;
  position: relative;
  flex: none;
}
.tab + .tab::before {
  content: "";
  position: absolute;
  left: 0; top: 13px;
  width: 2px; height: 32px;
  background: #4b4d4d;
}
.fav { width: 32px; height: 32px; flex: none; }
.fav-e { font-family: "Liberation Sans", sans-serif; font-size: 24px; font-weight: 700; fill: #fff; }
.tab-title {
  width: 66px;
  margin-left: 16px;
  white-space: nowrap;
  flex: none;
  -webkit-mask-image: linear-gradient(90deg, #000 38px, transparent 58px);
  mask-image: linear-gradient(90deg, #000 38px, transparent 58px);
}
.tab-close { width: 20px; height: 20px; margin-left: 14px; flex: none; }
.tab-active {
  width: 184px;
  margin-left: 8px;
  padding-left: 16px;
  background: #3c3c3c;
  border-radius: 20px 20px 0 0;
}
.tab-active::before { display: none; }
.tab-active::after {
  content: "";
  position: absolute;
  right: -14px; bottom: 0;
  width: 14px; height: 14px;
  background: radial-gradient(circle at 100% 0, transparent 14px, #3c3c3c 14.500px);
}
.tab-active .tab-close { margin-left: 12px; }
.newtab { width: 24px; height: 24px; margin: 16px 0 0 24px; flex: none; }
.tabmenu {
  width: 54px; height: 56px;
  margin-left: auto; margin-right: 13px;
  border-radius: 27px;
  background: #3c3c3c;
  display: flex; align-items: center; justify-content: center;
}
.tabmenu-icon { width: 16px; height: 12px; }

/* toolbar */
.toolbar {
  height: 96px;
  flex: none;
  display: flex;
  align-items: center;
  padding: 12px 0 14px 7px;
  background: #3c3c3c;
  border-bottom: 2px solid #0b0b2a;
}
.tool {
  width: 72px; height: 56px;
  padding: 0; border: 0;
  background: none;
  display: flex; align-items: center; justify-content: center;
  flex: none;
}
.tool-icon { width: 30px; height: 30px; }
.omnibox {
  width: 2281px;
  height: 68px;
  margin: 0 17px;
  padding: 0 10px;
  border-radius: 34px;
  background: #282828;
  display: flex;
  align-items: center;
  flex: none;
}
.siteinfo {
  width: 48px; height: 48px;
  border-radius: 50%;
  background: #3c3c3c;
  display: flex; align-items: center; justify-content: center;
}
.siteinfo-icon { width: 28px; height: 28px; }
.url { margin-left: 16px; font-size: 29.500px; color: #e3e3e3; }
.omni-icon { width: 30px; height: 30px; }
.omni-zoom { margin-left: auto; }
.omni-star { margin: 0 22px 0 35px; }
.tool-near { margin-left: 1px; }
.tool-sep { width: 2px; height: 40px; margin: 0 17px 0 16px; background: #5a5a5a; flex: none; }
.pill {
  height: 68px;
  border-radius: 34px;
  background: #1a4a72;
  display: flex;
  align-items: center;
  color: #c2e2ff;
  font-size: 26.500px;
  flex: none;
}
.pill-profile { width: 185px; margin-left: 8px; padding-left: 17px; border: 3px solid #8b8f92; }
.avatar {
  width: 38px; height: 38px;
  margin-right: 15px;
  border-radius: 50%;
  background: #4a6373;
  color: #e8eef2;
  font-size: 20px;
  line-height: 38px;
  text-align: center;
}
.pill-update { width: 358px; margin-left: 11px; padding-left: 25px; font-size: 27px; }
.kebab { margin-left: 21px; display: flex; flex-direction: column; gap: 6px; }
.kebab i { display: block; width: 6px; height: 6px; border-radius: 50%; background: #c2e2ff; }

/* dimmed page */
.page { position: relative; flex: 1; background: #5a6a72; overflow: hidden; border-bottom: 2px solid #9c9c9c; }
.page-nav { height: 114px; background: #00003a; }
.page-spacer { height: 1285px; }
.issues {
  margin-left: 88px;
  width: 3153px;
  table-layout: fixed;
  border-collapse: collapse;
  background: #7f7f7f;
  color: #1c1c1c;
}
.issues td {
  padding: 16px 18px 19px;
  border-left: 1px solid #6d6d6d;
  vertical-align: top;
}
.issues tr td:first-child { border-left: 0; }
.issues tr + tr td { border-top: 3px solid #6a6a6a; }
.c1 { width: 156px; } .c2 { width: 189px; } .c3 { width: 453px; } .c4 { width: 241px; }
.c5 { width: 413px; } .c6 { width: 236px; } .c7 { width: 199px; } .c8 { width: 219px; }
.c9 { width: 187px; } .c10 { width: 221px; } .c11 { width: 162px; } .c12 { width: 146px; }
.c13 { width: 187px; } .c14 { width: 144px; }
.bg-check {
  display: block;
  width: 27px; height: 28px;
  margin: 11px 0 0 2px;
  border: 2px solid #4a4a4a;
  border-radius: 5px;
}
.actions { padding-left: 16px !important; line-height: 44px; }
.act-row { height: 44px; display: flex; align-items: center; gap: 5px; }
.act-info { width: 28px; height: 28px; }
.act-share { width: 33px; height: 28px; }
.act-db { width: 28px; height: 30px; }

/* modal */
.modal {
  position: absolute;
  left: 2px; top: 0;
  width: 3325px;
  height: 1418px;
  display: flex;
  flex-direction: column;
  background: #fff;
  border-radius: 12px;
  box-shadow: 0 14px 46px rgba(0,0,0,.55);
}
.modal-head {
  height: 132px;
  flex: none;
  border-bottom: 2px solid #e5e5e5;
  display: flex;
  justify-content: flex-end;
  padding: 54px 36px 0 0;
}
.modal-x {
  color: #c8c8c8;
  font-size: 52px;
  font-weight: 700;
  line-height: 46px;
  width: 24px;
  display: flex;
  justify-content: center;
}
.modal-body { flex: 1; padding: 34px 99px 36px 33px; }
.frame {
  height: 1075px;
  display: grid;
  grid-template-columns: 1fr 27px;
  grid-template-rows: 1fr 26px;
  border: 3px solid #ccc;
  overflow: hidden;
}
.view { padding-top: 6px; overflow: hidden; }
.hist {
  display: grid;
  grid-template-columns: 787px 2144px;
  column-gap: 99px;
  align-items: start;
}
.hist-label { display: flex; flex-direction: column; align-items: flex-end; }
.lnk { color: #00f; }
.sort { color: #800080; font-style: italic; margin-top: 15px; }
.sort-next { color: #800080; font-style: italic; }
.sec-title {
  margin: 0 0 16px;
  font-size: 30px;
  line-height: 44px;
  font-weight: 700;
  text-align: center;
  color: #333;
}
.sec-comments { margin-top: 80px; }
.sec-issues { margin-top: 81px; margin-bottom: 33px; }
.grid-table {
  width: 2144px;
  table-layout: fixed;
  border-collapse: collapse;
  background: #f1f1f1;
}
.grid-table th {
  height: 47px;
  padding: 0 1px;
  border: 2px solid #000;
  background: #4f95d6;
  color: #fff;
  font-weight: 700;
  text-align: left;
  line-height: 43px;
}
.grid-table td {
  height: 76px;
  padding: 0 1px;
  border: 2px solid #6c97c9;
  line-height: 44px;
}
.newval { color: #800080; }
.s1 { width: 429px; } .s2 { width: 1189px; } .s3 { width: 526px; }
.m1 { width: 984px; } .m2 { width: 682px; } .m3 { width: 478px; }
.d1 { width: 255px; } .d2 { width: 349px; } .d3 { width: 769px; } .d4 { width: 771px; }
.vbar { background: #fafafa; border-left: 2px solid #e8e8e8; padding: 639px 0 0 5px; overflow: hidden; }
.vthumb { width: 16px; height: 397px; border-radius: 8px; background: #c1c1c1; }
.hbar { grid-column: 1 / 3; background: #fafafa; border-top: 2px solid #e8e8e8; }
.modal-foot {
  height: 141px;
  flex: none;
  border-top: 2px solid #e5e5e5;
  display: flex;
  justify-content: flex-end;
  align-items: flex-start;
  padding: 32px 33px 0 0;
}
.btn-close {
  width: 135px; height: 73px;
  padding: 0;
  border: 2px solid #ccc;
  border-radius: 8px;
  background: #fff;
  color: #333;
  font-family: "Liberation Sans", Arial, sans-serif;
  font-size: 30.8px;
}

/* dock */
.dock {
  position: absolute;
  left: 264px; top: 1927px;
  width: 2833px; height: 162px;
  padding: 20px 0 0 20px;
  display: flex;
  gap: 34px;
  border: 2px solid rgba(130,110,175,.55);
  border-radius: 46px;
  background: linear-gradient(90deg, #1f1236 0%, #211239 50%, #2a1244 58%, #4a1870 74%, #3a1662 88%, #2a1550 100%);
}
.dock-item { width: 108px; position: relative; flex: none; display: flex; flex-direction: column; align-items: center; }
.app { width: 108px; height: 108px; overflow: visible; flex: none; }
.dot { display: block; width: 8px; height: 9px; margin-top: 21px; border-radius: 50%; background: #a898cc; }
.dot-off { visibility: hidden; }
.dock-sep { width: 2px; height: 119px; margin: 0 13px; background: #6f5d92; flex: none; }
.badge {
  position: absolute;
  left: 71px; top: -12px;
  width: 50px; height: 50px;
  border-radius: 50%;
  background: #e2493c;
  color: #fff;
  font-size: 27px;
  line-height: 50px;
  text-align: center;
}
.cal-month { font-family: "Liberation Sans", sans-serif; font-size: 23px; font-weight: 700; fill: #fff; text-anchor: middle; }
.cal-day { font-family: "Lato", "Liberation Sans", sans-serif; font-size: 66px; font-weight: 300; fill: #2a2a2a; text-anchor: middle; }
.teams-t { font-family: "Liberation Sans", sans-serif; font-size: 30px; font-weight: 700; fill: #fff; text-anchor: middle; }
.zoom-word { font-family: "Inter", sans-serif; font-size: 30px; font-weight: 500; fill: #fff; text-anchor: middle; }
.petals { opacity: .82; }
```
